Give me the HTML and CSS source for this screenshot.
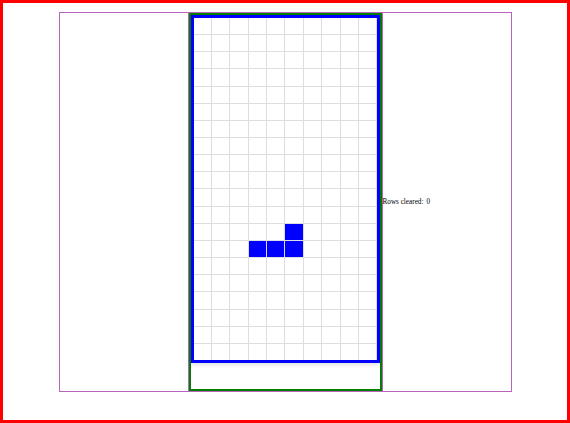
FILE: index.html
```html
<!DOCTYPE html>
<html>
<head>
<meta charset="utf-8">
<link rel="stylesheet" href="styles.css">
</head>
<body>
<div class="frame">
  <div class="game">
    <div class="side"></div>
    <div class="column">
      <div class="well">
        <div class="board">
          <div class="cell"></div><div class="cell"></div><div class="cell"></div><div class="cell"></div><div class="cell"></div><div class="cell"></div><div class="cell"></div><div class="cell"></div><div class="cell"></div><div class="cell"></div>
          <div class="cell"></div><div class="cell"></div><div class="cell"></div><div class="cell"></div><div class="cell"></div><div class="cell"></div><div class="cell"></div><div class="cell"></div><div class="cell"></div><div class="cell"></div>
          <div class="cell"></div><div class="cell"></div><div class="cell"></div><div class="cell"></div><div class="cell"></div><div class="cell"></div><div class="cell"></div><div class="cell"></div><div class="cell"></div><div class="cell"></div>
          <div class="cell"></div><div class="cell"></div><div class="cell"></div><div class="cell"></div><div class="cell"></div><div class="cell"></div><div class="cell"></div><div class="cell"></div><div class="cell"></div><div class="cell"></div>
          <div class="cell"></div><div class="cell"></div><div class="cell"></div><div class="cell"></div><div class="cell"></div><div class="cell"></div><div class="cell"></div><div class="cell"></div><div class="cell"></div><div class="cell"></div>
          <div class="cell"></div><div class="cell"></div><div class="cell"></div><div class="cell"></div><div class="cell"></div><div class="cell"></div><div class="cell"></div><div class="cell"></div><div class="cell"></div><div class="cell"></div>
          <div class="cell"></div><div class="cell"></div><div class="cell"></div><div class="cell"></div><div class="cell"></div><div class="cell"></div><div class="cell"></div><div class="cell"></div><div class="cell"></div><div class="cell"></div>
          <div class="cell"></div><div class="cell"></div><div class="cell"></div><div class="cell"></div><div class="cell"></div><div class="cell"></div><div class="cell"></div><div class="cell"></div><div class="cell"></div><div class="cell"></div>
          <div class="cell"></div><div class="cell"></div><div class="cell"></div><div class="cell"></div><div class="cell"></div><div class="cell"></div><div class="cell"></div><div class="cell"></div><div class="cell"></div><div class="cell"></div>
          <div class="cell"></div><div class="cell"></div><div class="cell"></div><div class="cell"></div><div class="cell"></div><div class="cell"></div><div class="cell"></div><div class="cell"></div><div class="cell"></div><div class="cell"></div>
          <div class="cell"></div><div class="cell"></div><div class="cell"></div><div class="cell"></div><div class="cell"></div><div class="cell"></div><div class="cell"></div><div class="cell"></div><div class="cell"></div><div class="cell"></div>
          <div class="cell"></div><div class="cell"></div><div class="cell"></div><div class="cell"></div><div class="cell"></div><div class="cell"></div><div class="cell"></div><div class="cell"></div><div class="cell"></div><div class="cell"></div>
          <div class="cell"></div><div class="cell"></div><div class="cell"></div><div class="cell"></div><div class="cell"></div><div class="cell filled"></div><div class="cell"></div><div class="cell"></div><div class="cell"></div><div class="cell"></div>
          <div class="cell"></div><div class="cell"></div><div class="cell"></div><div class="cell filled"></div><div class="cell filled"></div><div class="cell filled"></div><div class="cell"></div><div class="cell"></div><div class="cell"></div><div class="cell"></div>
          <div class="cell"></div><div class="cell"></div><div class="cell"></div><div class="cell"></div><div class="cell"></div><div class="cell"></div><div class="cell"></div><div class="cell"></div><div class="cell"></div><div class="cell"></div>
          <div class="cell"></div><div class="cell"></div><div class="cell"></div><div class="cell"></div><div class="cell"></div><div class="cell"></div><div class="cell"></div><div class="cell"></div><div class="cell"></div><div class="cell"></div>
          <div class="cell"></div><div class="cell"></div><div class="cell"></div><div class="cell"></div><div class="cell"></div><div class="cell"></div><div class="cell"></div><div class="cell"></div><div class="cell"></div><div class="cell"></div>
          <div class="cell"></div><div class="cell"></div><div class="cell"></div><div class="cell"></div><div class="cell"></div><div class="cell"></div><div class="cell"></div><div class="cell"></div><div class="cell"></div><div class="cell"></div>
          <div class="cell"></div><div class="cell"></div><div class="cell"></div><div class="cell"></div><div class="cell"></div><div class="cell"></div><div class="cell"></div><div class="cell"></div><div class="cell"></div><div class="cell"></div>
          <div class="cell"></div><div class="cell"></div><div class="cell"></div><div class="cell"></div><div class="cell"></div><div class="cell"></div><div class="cell"></div><div class="cell"></div><div class="cell"></div><div class="cell"></div>
        </div>
      </div>
    </div>
    <div class="side info">
      <span class="label">Rows cleared:</span><span class="count">0</span>
    </div>
  </div>
</div>
</body>
</html>
```

FILE: styles.css
```css
html, body {
  margin: 0;
  padding: 0;
  background: #fff;
}

.frame {
  box-sizing: border-box;
  width: 570px;
  height: 423px;
  border: 3px solid #ff0000;
  padding-top: 9px;
}

.game {
  box-sizing: border-box;
  width: 453px;
  height: 380px;
  margin: 0 auto;
  border: 1px solid #b864bd;
  display: grid;
  grid-template-columns: 1fr auto 1fr;
  align-items: stretch;
}

.column {
  border-left: 1px solid #b864bd;
  border-right: 1px solid #b864bd;
  display: flex;
}

.well {
  box-sizing: border-box;
  width: 193px;
  height: 378px;
  border: 2px solid #008000;
}

.board {
  box-sizing: border-box;
  width: 189px;
  height: 348px;
  border: 3px solid #0000ff;
  background: #dedede;
  display: grid;
  grid-template-columns: repeat(10, 1fr);
  grid-template-rows: repeat(20, 1fr);
  gap: 1px;
  box-shadow: 0 2px 4px rgba(0, 0, 0, 0.12);
}

.cell {
  background: #fff;
}

.cell.filled {
  background: #0000ff;
}

.info {
  display: flex;
  align-items: center;
  font-family: "Liberation Serif", "Times New Roman", serif;
  font-size: 7.2px;
  color: #000;
  white-space: nowrap;
}

.count {
  margin-left: 3px;
}
```
